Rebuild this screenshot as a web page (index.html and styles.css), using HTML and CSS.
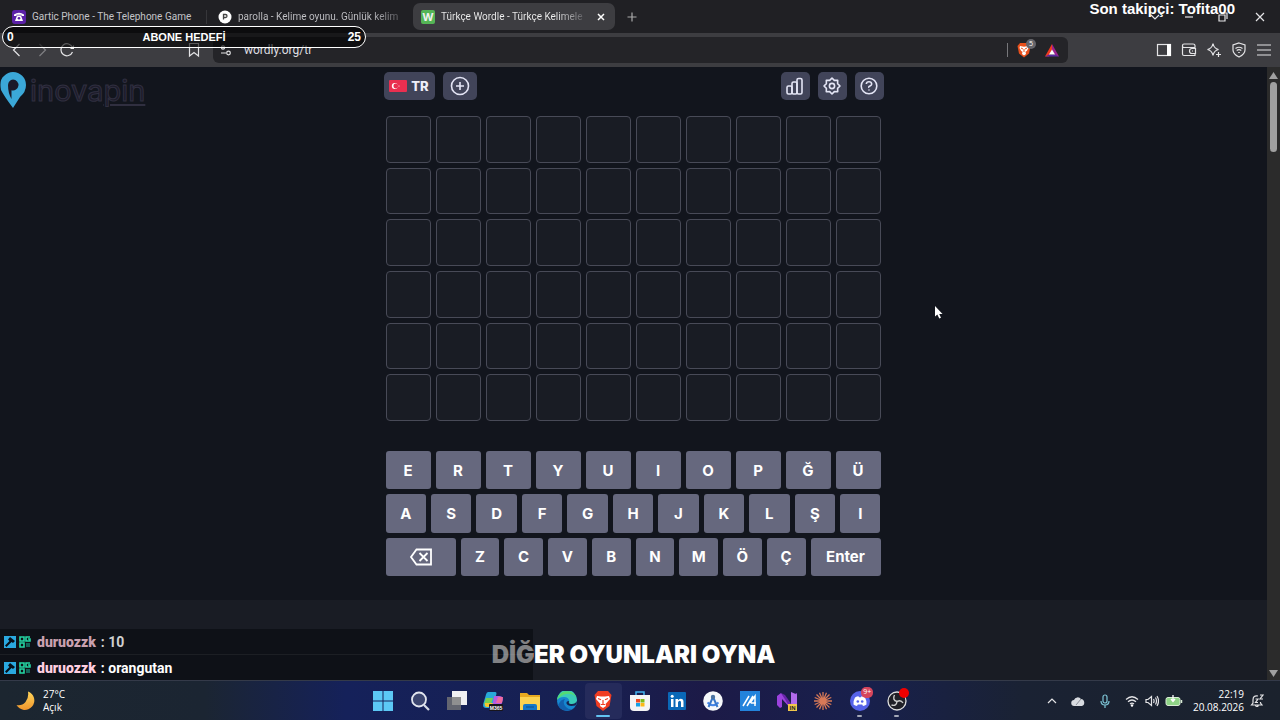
FILE: index.html
```
<!DOCTYPE html>
<html lang="tr">
<head>
    <meta charset="utf-8">
    <title>Türkçe Wordle - Türkçe Kelimeler</title>
    <link rel="stylesheet" href="styles.css">
</head>
<body>
    <div class="tabs">
        <button class="tab">
            <svg width="14" height="14" viewBox="0 0 14 14"><rect width="14" height="14" rx="3" fill="#5b21a8"/><path d="M2 6V4.500Q7 1 12 4.500V6H9.500V4.800H4.500V6zM5 5.500h4L11 11H3z" fill="#fff"/><circle cx="7" cy="8.200" r="1.300" fill="#5b21a8"/></svg>
            <span>Gartic Phone - The Telephone Game</span>
        </button>
        <button class="tab second">
            <svg width="14" height="14" viewBox="0 0 14 14"><circle cx="7" cy="7" r="6.500" fill="#fff"/><path d="M5.500 9.500v-5h2a1.400 1.400 0 0 1 0 3h-2" fill="none" stroke="#444" stroke-width="1.300"/></svg>
            <span>parolla - Kelime oyunu. Günlük kelim</span>
        </button>
        <button class="tab active">
            <b class="favicon">W</b>
            <span>Türkçe Wordle - Türkçe Kelimele</span>
            <svg class="close" width="8" height="8" viewBox="0 0 8 8"><path d="M1 1l6 6M7 1L1 7" stroke="#fff" stroke-width="1.500"/></svg>
        </button>
        <button class="icon newtab" aria-label="Yeni sekme"><svg width="10" height="10" viewBox="0 0 10 10"><path d="M5 0.500v9M0.500 5h9" stroke="#aaa" stroke-width="1.200"/></svg></button>
        <div class="window-buttons">
            <button class="icon" aria-label="Sekmeler"><svg width="10" height="10" viewBox="0 0 10 10"><path d="M1 3l4 4 4-4" class="line"/></svg></button>
            <button class="icon" aria-label="Küçült"><svg width="10" height="10" viewBox="0 0 10 10"><path d="M1 5h8" class="line"/></svg></button>
            <button class="icon" aria-label="Geri yükle"><svg width="10" height="10" viewBox="0 0 10 10"><path d="M1 3h6v6H1zM3 1h6v6" class="line"/></svg></button>
            <button class="icon" aria-label="Kapat"><svg width="10" height="10" viewBox="0 0 10 10"><path d="M1 1l8 8M9 1L1 9" class="line"/></svg></button>
        </div>
    </div>

    <div class="toolbar">
        <div class="nav">
            <button class="icon" aria-label="Geri"><svg width="16" height="16" viewBox="0 0 16 16"><path d="M10.500 2L4.500 8l6 6" class="line"/></svg></button>
            <button class="icon dim" aria-label="İleri"><svg width="16" height="16" viewBox="0 0 16 16"><path d="M5.500 2l6 6-6 6" class="line"/></svg></button>
            <button class="icon" aria-label="Yenile"><svg width="16" height="16" viewBox="0 0 16 16"><path d="M13.500 10A6 6 0 1 1 13.500 5.500" class="line"/><path d="M15 3v4h-4z" fill="#eee"/></svg></button>
        </div>
        <button class="icon bookmark" aria-label="Yer işareti"><svg width="16" height="16" viewBox="0 0 16 16"><path d="M3.500 1.500h9v12.500L8 10.500 3.500 14z" class="line"/></svg></button>
        <div class="address">
            <svg width="12" height="12" viewBox="0 0 12 12"><path d="M5 3.500h6M1 9h5" class="line"/><circle cx="3" cy="3.500" r="1.600" class="line"/><circle cx="8.500" cy="9" r="1.800" class="line"/></svg>
            <input type="text" value="wordly.org/tr" aria-label="Adres">
            <i class="divider"></i>
            <button class="icon shield" aria-label="Brave Shields">
                <svg width="14" height="16" viewBox="0 0 14 16"><path d="M3 1h8l2.500 3L12 11.500 7 15.500 2 11.500 0.500 4z" fill="#e8501c"/><path d="M3 4l4 .8L11 4l.5 2-1.700 3-1.300.8L9 12l-2 1.500L5 12l.5-2.200L4.200 9 2.500 6z" fill="#fff"/><path d="M4 6l2 1M10 6L8 7M7 7v3" stroke="#e8501c"/></svg>
                <span class="badge">5</span>
            </button>
            <button class="icon" aria-label="Brave Rewards"><svg width="14" height="13" viewBox="0 0 14 13"><path d="M7 0L0 12.500h4L7 6z" fill="#f03a20"/><path d="M7 0l7 12.500-4-1L7 6z" fill="#9b2390"/><path d="M0 12.500h14l-4-2H4z" fill="#5a2aa5"/><path d="M7 5.500L10 10.500H4z" fill="#fff"/></svg></button>
        </div>
        <div class="tools">
            <button class="icon" aria-label="Kenar çubuğu"><svg width="16" height="16" viewBox="0 0 16 16"><rect x="1.500" y="2.500" width="13" height="11" class="line"/><path d="M11 2h4v12h-4z" fill="#fff"/></svg></button>
            <button class="icon" aria-label="Cüzdan"><svg width="16" height="16" viewBox="0 0 16 16"><path d="M14 5.500V3.500q0-1.500-2-1.500H3Q1.500 2 1.500 3.500V12q0 1.500 1.500 1.500h11v-2M1.500 4.500q.5 1 1.500 1h11.500M14.500 6.500v5H11a2.500 2.500 0 0 1 0-5zM11 9h1" class="line"/></svg></button>
            <button class="icon" aria-label="Leo"><svg width="16" height="16" viewBox="0 0 16 16"><path d="M7 1.500Q8 6.500 12.500 7.500 8 8.500 7 13.500 6 8.500 1.500 7.500 6 6.500 7 1.500z" class="line"/><path d="M12.500 10v5M10 12.500h5" class="line"/></svg></button>
            <button class="icon" aria-label="VPN"><svg width="16" height="16" viewBox="0 0 16 16"><path d="M8 1l6 2v5q0 4-6 7-6-3-6-7V3zM4.500 6.500q3.500-2.500 7 0M5.700 8.500q2.300-1.600 4.600 0M7.200 10.500h1.600" class="line"/></svg></button>
            <button class="icon" aria-label="Menü"><svg width="16" height="16" viewBox="0 0 16 16"><path d="M1 3h14M1 8h14M1 13h14" class="line"/></svg></button>
        </div>
    </div>

    <div class="viewport">
        <main class="page">
            <div class="game">
                <header class="menu">
                    <button class="menu-button lang">
                        <svg width="18" height="12" viewBox="0 0 18 12"><rect width="18" height="12" rx="1" fill="#e92f50"/><circle cx="5.800" cy="6" r="3" fill="#fff"/><circle cx="6.800" cy="6" r="2.400" fill="#e92f50"/><path d="M9 6l1.800-.8L10 6l.8.900z" fill="#fff"/></svg>
                        TR
                    </button>
                    <button class="menu-button plus" aria-label="Yeni oyun"><svg width="20" height="20" viewBox="0 0 20 20"><circle cx="10" cy="10" r="8.500"/><path d="M10 6v8M6 10h8"/></svg></button>
                    <span class="spacer"></span>
                    <button class="menu-button" aria-label="İstatistik"><svg width="20" height="20" viewBox="0 0 20 20"><rect x="2" y="10" width="5" height="8" rx="1.500"/><rect x="7" y="6" width="5" height="12" rx="1.500"/><rect x="12" y="2.500" width="5" height="15.500" rx="1.500"/></svg></button>
                    <button class="menu-button" aria-label="Ayarlar"><svg width="20" height="20" viewBox="0 0 20 20"><path d="M10 2L12.300 4.400 15.700 4.300 15.600 7.700 18 10 15.600 12.300 15.700 15.700 12.300 15.600 10 18 7.700 15.600 4.300 15.700 4.400 12.300 2 10 4.400 7.700 4.300 4.300 7.700 4.400z"/><circle cx="10" cy="10" r="2.600"/></svg></button>
                    <button class="menu-button" aria-label="Yardım"><svg width="20" height="20" viewBox="0 0 20 20"><circle cx="10" cy="10" r="7.800"/><path d="M7.300 8Q7.500 5.800 10 5.800T12.700 8Q12.700 9.300 11 10T10 11.700M10 13.500v1"/></svg></button>
                </header>

                <div class="board" id="board"></div>

                <div class="keyboard">
                    <div class="key-row">
                        <button>E</button><button>R</button><button>T</button><button>Y</button><button>U</button><button>I</button><button>O</button><button>P</button><button>Ğ</button><button>Ü</button>
                    </div>
                    <div class="key-row">
                        <button>A</button><button>S</button><button>D</button><button>F</button><button>G</button><button>H</button><button>J</button><button>K</button><button>L</button><button>Ş</button><button>I</button>
                    </div>
                    <div class="key-row">
                        <button class="wide" aria-label="Sil"><svg width="24" height="18" viewBox="0 0 24 18"><path d="M7.500 1.500H22v15H7.500L2 9zM10.500 5l8 8M18.500 5l-8 8" fill="none" stroke="#fff" stroke-width="1.800"/></svg></button><button>Z</button><button>C</button><button>V</button><button>B</button><button>N</button><button>M</button><button>Ö</button><button>Ç</button><button class="wide">Enter</button>
                    </div>
                </div>
            </div>

            <section class="more">
                <h2>DİĞER OYUNLARI OYNA</h2>
            </section>
        </main>
        <div class="scrollbar">
            <svg width="9" height="7" viewBox="0 0 9 7"><path d="M4.500 0L9 7H0z" fill="#a0a0a0"/></svg>
            <i class="thumb"></i>
            <svg width="9" height="7" viewBox="0 0 9 7"><path d="M0 0h9L4.500 7z" fill="#a0a0a0"/></svg>
        </div>
    </div>

    <footer class="taskbar">
        <button class="weather">
            <svg width="20" height="20" viewBox="0 0 20 20"><defs><linearGradient id="moon" x2="0" y2="1"><stop stop-color="#ffd65a"/><stop offset="1" stop-color="#f0952c"/></linearGradient></defs><path d="M12 0.500A9.500 9.500 0 1 1 0.500 14Q6 15 9.500 11T12 0.500z" fill="url(#moon)"/></svg>
            <span>27°C<br>Açık</span>
        </button>
        <div class="apps">
            <button aria-label="Başlat"><svg viewBox="0 0 20 20"><path d="M0 0h9.500v9.500H0zM10.500 0H20v9.500h-9.500zM0 10.500h9.500V20H0zM10.500 10.500H20V20h-9.500z" fill="#5cc8f5"/></svg></button>
            <button aria-label="Ara"><svg viewBox="0 0 20 20"><path d="M14 14l5 5" stroke="#d5dae5" stroke-width="2.200"/><circle cx="9" cy="8.500" r="7" fill="#3b456f" stroke="#e2e6ef" stroke-width="1.800"/></svg></button>
            <button aria-label="Görev görünümü"><svg viewBox="0 0 20 20"><path d="M5 0h15v14H5z" fill="#f0f0f2"/><path d="M0 6h14v13H0z" fill="#777" opacity=".8"/></svg></button>
            <button aria-label="M365"><svg viewBox="0 0 20 20"><path d="M5 1h7q2 0 1.300 2.500L10 15q-.7 2-3 2H3Q-1 17 .5 12L3 3.500Q3.500 1 5 1z" fill="#28a9d8"/><path d="M3 7h7L8 13H1z" fill="#76cf52"/><path d="M2 12h8l-1 4H4q-3 0-2-4z" fill="#f4c62d"/><path d="M11 5h5q5 0 3.500 5L18 15q-1 3-4 3h-5z" fill="#b65be2"/><path d="M15 6h5l-1 6h-6z" fill="#ef6aa0"/><rect x="6" y="13" width="14" height="7" rx="1" fill="#18151c"/><text x="13" y="18.500" text-anchor="middle" class="m365">M365</text></svg></button>
            <button aria-label="Dosya Gezgini"><svg viewBox="0 0 20 20"><path d="M0 2h7l2 2h11v15H0z" fill="#e7a91f"/><path d="M0 6h20v13H0z" fill="#fbd250"/><path d="M3 19v-4q0-2 2-2h10q2 0 2 2v4z" fill="#1478c8"/><path d="M6 16h8" stroke="#0b4f8c"/></svg></button>
            <button aria-label="Edge"><svg viewBox="0 0 20 20"><circle cx="10" cy="10" r="10" fill="#1687d0"/><path d="M0 9A10 10 0 0 1 20 9Q20 14 14 13.500 11 13 12.500 11 12 6 7 6 2 6 0 9z" fill="#3acbb8"/><path d="M3 3A10 10 0 0 1 19.500 7Q16 2 9 3 4 4 0 9 0 6 3 3z" fill="#54da73"/><path d="M8 8Q5 12 9 16T17 17A10 10 0 0 1 1 14Q4 8 8 8z" fill="#1260ae"/><path d="M12 10Q9 10 9.500 12.500 11 16 18.500 14.500 20 12 20 10 18 13.500 14 13 11 13 12 10z" fill="#172250"/></svg></button>
            <button class="running open" aria-label="Brave"><svg viewBox="0 0 20 20"><path d="M5 0h10l3.500 4-2 11-6.500 5-6.500-5-2-11z" fill="#f03d22"/><path d="M4 5l4 .5h4l4-.5 1 3-3.500 4-1 1 .5 2-3 2-3-2 .5-2-1-1L3 8z" fill="#fff"/><path d="M5 7.500l3 1.300M15 7.500l-3 1.300M10 9v4M8 13.500h4" stroke="#f03d22" stroke-width="1.200"/></svg></button>
            <button aria-label="Microsoft Store"><svg viewBox="0 0 20 20"><path d="M6 5V1h8v4" fill="none" stroke="#42b3ee" stroke-width="1.500"/><path d="M0 4h20v12q0 4-4 4H4q-4 0-4-4z" fill="#f5f5f5"/><path d="M6 8h4v3.500H6z" fill="#f04a23"/><path d="M10.500 8h4v3.500h-4z" fill="#7dbb18"/><path d="M6 12h4v3.500H6z" fill="#14a2e8"/><path d="M10.500 12h4v3.500h-4z" fill="#fcb915"/></svg></button>
            <button aria-label="LinkedIn"><svg viewBox="0 0 20 20"><rect x="1" y="1" width="18" height="18" rx="1" fill="#0a68b7"/><path d="M4 8h2.500v8H4zM8.500 8H11v1.200q1-1.500 2.700-1.500 2.800 0 2.800 3.300v5H14v-4.500q0-1.700-1.300-1.700T11 11.500V16H8.500z" fill="#fff"/><circle cx="5.200" cy="5.300" r="1.500" fill="#fff"/></svg></button>
            <button aria-label="Android Studio"><svg viewBox="0 0 20 20"><circle cx="10" cy="10" r="9.800" fill="#f6f8fa"/><path d="M4.500 11.500Q10 17 15.500 11.500" fill="none" stroke="#4485e8" stroke-width="1.800"/><path d="M10 6L5.500 16M10 6l4.500 10" stroke="#3a78c8" stroke-width="2"/><circle cx="10" cy="6" r="2.200" fill="#4c74a0"/></svg></button>
            <button aria-label="Monitör"><svg viewBox="0 0 20 20"><rect width="20" height="20" fill="#2383dc"/><path d="M3 15L9 5M7 15l6-10M10 12l5-7v10M11 12h5" fill="none" stroke="#fff" stroke-width="1.500"/></svg></button>
            <button aria-label="Visual Studio"><svg viewBox="0 0 20 20"><path d="M0 5l4-3 10 12V5l6-3v15l-5 2L5 8v8l-2 1-3-3z" fill="#9b42dd"/><path d="M14 1l6 2.500v13L14 19z" fill="#b16bed"/><path d="M4 2l4 2 7 10-1 4z" fill="#6825a9"/><rect x="11" y="13" width="9" height="7" fill="#f0c74b"/><text x="15.500" y="19" text-anchor="middle" class="insider">IN</text></svg></button>
            <button aria-label="Claude"><svg viewBox="0 0 20 20"><path d="M10 1v18M1 10h18M3.500 3.500l13 13M16.500 3.500l-13 13M6.500 1.700l7 16.600M13.500 1.700l-7 16.600M1.700 6.500l16.600 7M1.700 13.500l16.600-7" stroke="#d87957" stroke-width="1.300"/></svg></button>
            <button class="running" aria-label="Discord"><svg viewBox="0 0 20 20"><circle cx="10" cy="10" r="10" fill="#5663e9"/><path d="M5 6.500q2-1.200 3.500-1.200l.5 1h2l.5-1q1.500 0 3.500 1.200 2 3.500 1.500 7-1.500 1.200-3.500 1.500l-.8-1.500H7.800L7 15q-2-.3-3.500-1.500Q3 10 5 6.500z" fill="#fff"/><circle cx="7.800" cy="10.500" r="1.300" fill="#5663e9"/><circle cx="12.200" cy="10.500" r="1.300" fill="#5663e9"/></svg><span class="badge red">9+</span></button>
            <button class="running" aria-label="OBS"><svg viewBox="0 0 20 20"><circle cx="10" cy="10" r="9" fill="#202027" stroke="#ddd" stroke-width="1.300"/><path d="M7.500 4Q5 9 10 10.500 14 8.500 16 12M10 10.500Q9.500 15.500 4.500 14" fill="none" stroke="#ccc" stroke-width="1.400"/></svg><span class="badge rec"></span></button>
        </div>
        <div class="tray">
            <button class="icon" aria-label="Gizli simgeler"><svg width="10" height="10" viewBox="0 0 10 10"><path d="M1 7l4-4 4 4" class="line"/></svg></button>
            <button class="icon" aria-label="OneDrive"><svg width="14" height="12" viewBox="0 0 14 12"><path d="M3.500 11a3 3 0 0 1-.5-6 4 4 0 0 1 7-1 3.600 3.600 0 0 1 .8 7z" fill="#d8dbe0"/><path d="M5 10l5-6" stroke="#8a8f98"/></svg></button>
            <button class="icon" aria-label="Mikrofon"><svg width="12" height="14" viewBox="0 0 12 14"><path d="M4 3a2 2 0 0 1 4 0v4a2 2 0 0 1-4 0zM2 7q0 4 4 4t4-4M6 11v3" fill="none" stroke="#7fc7d8" stroke-width="1.200"/></svg></button>
            <button class="icon system" aria-label="Ağ, ses ve pil">
                <svg width="14" height="12" viewBox="0 0 14 12"><path d="M1 4.500Q7-1 13 4.500M3 6.800q4-3.600 8 0M5 9q2-1.800 4 0" class="line"/><circle cx="7" cy="10.500" r="1.200" fill="#fff"/></svg>
                <svg width="14" height="12" viewBox="0 0 14 12"><path d="M1 4.500h2L6.500 1.500v9L3 7.500H1zM8.500 4q1.200 2 0 4M10.500 2.500q2 3.500 0 7M12 1q3 5 0 10" class="line"/></svg>
                <svg width="18" height="12" viewBox="0 0 18 12"><rect x="1" y="2.500" width="14" height="8" rx="2" fill="#8fd486" stroke="#d9ecd5"/><path d="M16.500 5v3" stroke="#d9ecd5" stroke-width="1.500"/><path d="M8 0v6M6 4l2 2.500L10 4" fill="none" stroke="#fff" stroke-width="1.300"/></svg>
            </button>
            <time>22:19<br>20.08.2026</time>
            <button class="icon" aria-label="Bildirimler"><svg width="14" height="14" viewBox="0 0 14 14"><path d="M8 2Q3 1 3 6v3l-1.500 2H12L10.500 9V8M5.500 11.500q1 2 3 0M5.500 5h2.500l-2.500 3.500H8M10 1h3l-3 4h3" class="line"/></svg></button>
        </div>
    </footer>

    <!-- stream overlays -->
    <div class="goal"><span>0</span><span class="title">ABONE HEDEFİ</span><span class="target">25</span></div>
    <div class="follower">Son takipçi: Tofita00</div>
    <div class="sponsor">
        <svg width="26" height="36" viewBox="0 0 26 36"><path d="M13 0A13 13 0 0 1 26 13Q26 20 20 25L13 36Q4 24 1 18-1 8 4 4 8 0 13 0z" fill="#3ba8d8"/><path d="M13 7.500a5.500 5.500 0 1 1-1.500 10.800V27Q8 21 8 13 8.500 8 13 7.500z" fill="#1b1a2a"/></svg>
        <span>inova<u>pin</u></span>
    </div>
    <div class="chat">
        <p class="old"><svg width="12" height="12" viewBox="0 0 12 12"><rect width="12" height="12" fill="#2aa9e0"/><path d="M6 1l5 4-2 2-1.500-1L2.500 11 1 9.500 5.500 5 4 3.500z" fill="#071019"/></svg><svg width="12" height="12" viewBox="0 0 12 12"><path d="M1 1h4v4H1zM1 7h4v4H1zM11 1H7v4h4V3H9" fill="none" stroke="#25d6a4" stroke-width="1.600"/><path d="M7 7h4v4H7z" fill="#14665a"/></svg><b>duruozzk</b><span>: 10</span></p>
        <p><svg width="12" height="12" viewBox="0 0 12 12"><rect width="12" height="12" fill="#2aa9e0"/><path d="M6 1l5 4-2 2-1.500-1L2.500 11 1 9.500 5.500 5 4 3.500z" fill="#071019"/></svg><svg width="12" height="12" viewBox="0 0 12 12"><path d="M1 1h4v4H1zM1 7h4v4H1zM11 1H7v4h4V3H9" fill="none" stroke="#25d6a4" stroke-width="1.600"/><path d="M7 7h4v4H7z" fill="#14665a"/></svg><b>duruozzk</b><span>: orangutan</span></p>
    </div>
    <svg class="cursor" width="8" height="13" viewBox="0 0 8 13"><path d="M0 0v10.500L2.300 8.500 4.300 12.500 6 11.700 4.200 8H7.500z" fill="#fff"/></svg>

    <script>
        // 6 guesses, 10 letters each
        const board = document.getElementById("board");
        for (let i = 0; i < 60; i++) {
            const cell = document.createElement("div");
            cell.className = "cell";
            board.appendChild(cell);
        }
    </script>
</body>
</html>
```
FILE: styles.css
```
* {
    box-sizing: border-box;
}
body {
    margin: 0;
    height: 100vh;
    display: flex;
    flex-direction: column;
    overflow: hidden;
    position: relative;
    background-color: #12151d;
    color: #ffffff;
    font-family: "Open Sans", "Noto Sans", sans-serif;
    font-size: 11px;
}
button {
    padding: 0;
    border: none;
    background: none;
    color: inherit;
    font: inherit;
    cursor: pointer;
}
svg {
    flex: none;
    display: block;
}
.line {
    fill: none;
    stroke: #e4e4e6;
    stroke-width: 1.2;
}
.icon {
    flex: none;
    display: flex;
    align-items: center;
    justify-content: center;
}
.dim {
    opacity: 0.4;
}

/* Browser tabs */
.tabs {
    flex: none;
    height: 33px;
    display: flex;
    align-items: center;
    padding-left: 4px;
    background-color: #202024;
    font-family: "Roboto", sans-serif;
    font-size: 10px;
}
.tab {
    flex: none;
    display: flex;
    align-items: center;
    gap: 6px;
    width: 202px;
    height: 27px;
    padding: 0 8px;
    color: #c4c4c8;
    text-align: left;
    white-space: nowrap;
}
.tab span {
    flex: 1;
}
.tab.second {
    width: 207px;
    height: 14px;
    padding: 0 11px;
    border-left: 1px solid #36363a;
}
.tab.second span,
.tab.active span {
    background: linear-gradient(to right, currentColor 80%, #55555a);
    background-clip: text;
    -webkit-background-clip: text;
    -webkit-text-fill-color: transparent;
}
.tab.active {
    border-radius: 7px;
    background-color: #3d3d41;
    color: #f0f0f0;
}
.favicon {
    flex: none;
    width: 14px;
    height: 14px;
    border-radius: 2px;
    background-color: #55b556;
    font: bold 11px/14px "Inter", sans-serif;
    text-align: center;
}
.tab .close {
    margin: 0 2px 0 6px;
}
.newtab {
    width: 34px;
}
.window-buttons {
    margin-left: auto;
    display: flex;
}
.window-buttons .icon {
    width: 34px;
}
.window-buttons .icon:last-child {
    width: 40px;
}

/* Toolbar */
.toolbar {
    flex: none;
    height: 34px;
    display: flex;
    align-items: center;
    padding: 0 8px 0 9px;
    background-color: #3d3d41;
}
.nav {
    display: flex;
    width: 177px;
    gap: 9px;
}
.bookmark {
    margin-right: 11px;
}
.address {
    flex: 1;
    height: 26px;
    display: flex;
    align-items: center;
    gap: 12px;
    padding: 0 9px 0 7px;
    border-radius: 6px;
    background-color: #242428;
}
.address input {
    flex: 1;
    min-width: 0;
    padding: 0;
    border: none;
    outline: none;
    background: none;
    color: #dedee0;
    font: 12px "Roboto", sans-serif;
}
.divider {
    width: 1px;
    height: 14px;
    background-color: #77777b;
}
.shield {
    position: relative;
    margin: 0 2px 0 -3px;
}
.badge {
    position: absolute;
    top: -3px;
    right: -5px;
    width: 10px;
    height: 10px;
    border-radius: 5px;
    background-color: #65656b;
    font-size: 7px;
    line-height: 10px;
    text-align: center;
}
.tools {
    display: flex;
    gap: 9px;
    margin-left: 88px;
}

/* Page */
.viewport {
    flex: 1;
    min-height: 0;
    display: flex;
}
.page {
    flex: 1;
    display: flex;
    flex-direction: column;
    overflow: hidden;
}
.game {
    width: 100%;
    max-width: 500px;
    margin: 0 auto;
    padding: 5px 0 24px;
}
.menu {
    display: flex;
    gap: 8px;
    margin-bottom: 16px;
}
.menu-button {
    width: 29px;
    height: 28px;
    display: flex;
    align-items: center;
    justify-content: center;
    border-radius: 5px;
    background-color: #414459;
    color: #eeeef8;
}
.menu-button svg {
    stroke: #e4e5f5;
    stroke-width: 1.6;
    stroke-linejoin: round;
    fill: none;
}
.menu-button.lang svg {
    stroke: none;
}
.menu-button.plus {
    width: 34px;
}
.menu-button.lang {
    width: 51px;
    gap: 4px;
    font: 800 13px "Inter", sans-serif;
}
.spacer {
    flex: 1;
}
.board {
    display: grid;
    grid-template-columns: repeat(10, 1fr);
    grid-auto-rows: 1fr;
    gap: 5px;
    height: 305px;
    margin: 0 3px 30px 2px;
}
.cell {
    border: 1px solid #484a57;
    border-radius: 4px;
    background-color: #191c24;
}
.keyboard {
    display: grid;
    grid-auto-rows: 1fr;
    gap: 5px;
    height: 125px;
    margin: 0 3px 0 2px;
}
.key-row {
    display: flex;
    gap: 5px;
}
.key-row button {
    flex: 1;
    display: flex;
    align-items: center;
    justify-content: center;
    border-radius: 3px;
    background-color: #66687e;
    font: bold 15px "Inter", sans-serif;
}
.key-row .wide {
    flex: 0 0 70px;
}
.more {
    flex: 1;
    background-color: #191c24;
    text-align: center;
}
.more h2 {
    margin: 40px 0 0;
    font: 900 24px/30px "Inter", sans-serif;
}
.scrollbar {
    flex: none;
    width: 13px;
    display: flex;
    flex-direction: column;
    align-items: center;
    padding: 5px 0 3px;
    background-color: #2b2b2b;
}
.thumb {
    width: 7px;
    height: 70px;
    margin: 3px 0 auto;
    border-radius: 4px;
    background-color: #a0a0a0;
}

/* Taskbar */
.taskbar {
    flex: none;
    height: 40px;
    display: grid;
    grid-template-columns: 1fr 550px 1fr;
    align-items: center;
    border-top: 1px solid #343a49;
    background: linear-gradient(to right, #1c2630 0%, #1b2532 16%, #15215a 27%, #172052 45%, #1c1a47 55%, #18204c 68%, #1a2233 80%, #1b222d 100%);
    font-size: 10px;
    line-height: 13px;
}
.weather {
    display: flex;
    align-items: center;
    gap: 7px;
    padding-left: 16px;
    text-align: left;
}
.apps {
    display: grid;
    grid-template-columns: repeat(15, 1fr);
}
.apps button {
    position: relative;
    height: 36px;
    display: flex;
    align-items: center;
    justify-content: center;
    border-radius: 4px;
}
.apps svg {
    width: 20px;
    height: 20px;
}
.apps .open {
    background-color: #252b5b;
}
.running::after {
    content: "";
    position: absolute;
    bottom: 2px;
    width: 5px;
    height: 2px;
    border-radius: 1px;
    background-color: #a5a9b8;
}
.running.open::after {
    width: 14px;
    background-color: #62c3f2;
}
.m365 {
    font: bold 5px "Liberation Sans", sans-serif;
    fill: #ffffff;
}
.insider {
    font: bold 6px "Liberation Sans", sans-serif;
    fill: #222222;
}
.badge.red {
    top: 4px;
    right: 5px;
    width: 12px;
    height: 11px;
    background-color: #d6455c;
}
.badge.rec {
    top: 5px;
    right: 6px;
    background-color: #ee0000;
}
.tray {
    display: flex;
    align-items: center;
    justify-content: flex-end;
    gap: 14px;
    padding-right: 16px;
}
.system {
    gap: 6px;
}
.tray time {
    margin: 0 -8px 0 -4px;
    text-align: right;
}

/* Overlays */
.goal {
    position: absolute;
    top: 26px;
    left: 2px;
    width: 364px;
    height: 22px;
    display: grid;
    grid-template-columns: 1fr auto 1fr;
    align-items: center;
    padding: 0 4px;
    border: 1px solid #ffffff;
    border-radius: 11px;
    background-color: rgba(0, 0, 0, 0.6);
    font: bold 12px "Liberation Sans", sans-serif;
}
.goal .title {
    font-size: 11px;
}
.goal .target {
    text-align: right;
}
.follower {
    position: absolute;
    top: 0;
    right: 45px;
    font: bold 15px/18px "Liberation Sans", sans-serif;
}
.sponsor {
    position: absolute;
    top: 72px;
    left: 0;
    display: flex;
    gap: 4px;
    font: 29px/38px "Inter", sans-serif;
    color: #1c1b29;
    -webkit-text-stroke: 1px #302f40;
}
.sponsor u {
    text-decoration-thickness: 2px;
    text-underline-offset: 3px;
}
.chat {
    position: absolute;
    left: 0;
    bottom: 40px;
    width: 533px;
    background-color: rgba(4, 6, 10, 0.5);
    font: bold 14px "Roboto", sans-serif;
}
.chat p {
    display: flex;
    align-items: center;
    gap: 3px;
    height: 25px;
    margin: 0;
    padding-left: 4px;
}
.chat p.old {
    border-bottom: 1px solid rgba(255, 255, 255, 0.06);
    height: 26px;
    color: #d0d0d0;
}
.chat b {
    margin: 0 2px 0 3px;
    color: #ffcfe0;
}
.chat .old b {
    color: #c9a1af;
}
.cursor {
    position: absolute;
    top: 306px;
    left: 935px;
}
```
